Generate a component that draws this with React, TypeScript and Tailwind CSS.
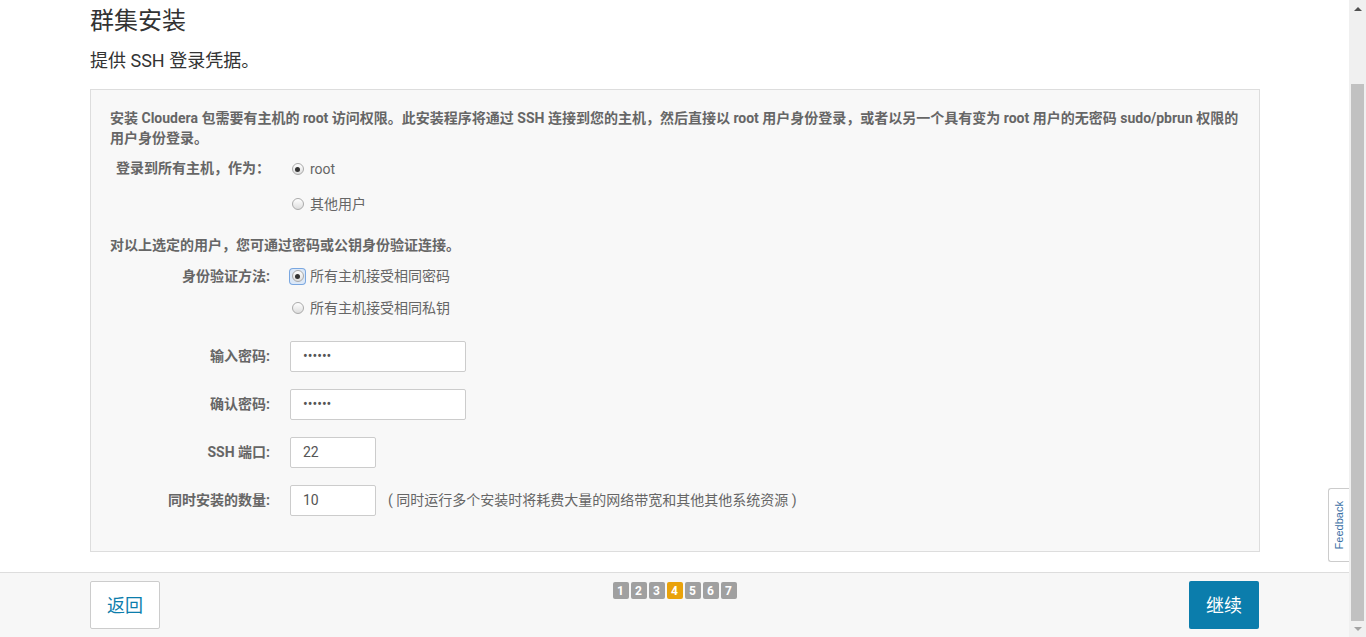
import React from "react";

const font = { fontFamily: '"Roboto", "Noto Sans CJK SC", sans-serif' };

function Radio({ checked, focus }: { checked?: boolean; focus?: boolean }) {
  return (
    <span
      className={
        "inline-flex items-center justify-center w-[15px] h-[15px] " +
        (focus ? "rounded-[3px] ring-1 ring-[#7aa7e0] bg-[#dce8f7]" : "")
      }
    >
      <span className="w-[12px] h-[12px] rounded-full border border-[#aaa] bg-gradient-to-b from-[#fff] to-[#ddd] flex items-center justify-center">
        {checked && <span className="w-[5px] h-[5px] rounded-full bg-[#333]" />}
      </span>
    </span>
  );
}

function RadioRow({ label, checked, focus }: { label: string; checked?: boolean; focus?: boolean }) {
  return (
    <div className="flex items-center gap-[5px] h-[20px] text-[14px] leading-[20px] text-[#666]">
      <Radio checked={checked} focus={focus} />
      <span>{label}</span>
    </div>
  );
}

function Field({ label, value, wide, note }: { label: string; value: string; wide?: boolean; note?: string }) {
  return (
    <div className="flex items-center h-[31px]">
      <div className="w-[180px] pr-[20px] text-right text-[14px] font-bold text-[#666]">{label}</div>
      <div
        className={
          "h-[31px] border border-[#ccc] bg-white rounded-[2px] flex items-center px-[12px] text-[14px] text-[#555] " +
          (wide ? "w-[176px]" : "w-[86px]")
        }
      >
        {value}
      </div>
      {note && <span className="ml-[12px] text-[14px] text-[#666]">{note}</span>}
    </div>
  );
}

const steps = [1, 2, 3, 4, 5, 6, 7];

export default function App() {
  return (
    <div className="w-[1366px] h-[637px] overflow-hidden flex bg-white relative" style={font}>
      <div className="w-[1349px] h-full flex flex-col">
        <div className="flex-1 px-[90px]">
          <h1 className="text-[24px] leading-[28px] text-[#333] mt-[7px]">群集安装</h1>
          <p className="text-[18px] leading-[24px] text-[#333] mt-[14px]">提供 SSH 登录凭据。</p>
          <div className="mt-[16px] w-[1170px] h-[463px] border border-[#ddd] bg-[#f8f8f8] px-[19px] pt-[18px]">
            <p className="text-[14px] leading-[20px] font-bold text-[#666]">
              安装 Cloudera 包需要有主机的 root 访问权限。此安装程序将通过 SSH 连接到您的主机，然后直接以 root 用户身份登录，或者以另一个具有变为 root 用户的无密码 sudo/pbrun 权限的用户身份登录。
            </p>
            <div className="flex mt-[10px]">
              <div className="w-[180px] pl-[6px] text-[14px] leading-[20px] font-bold text-[#666]">登录到所有主机，作为：</div>
              <div className="flex flex-col gap-[15px] pt-[1px]">
                <RadioRow label="root" checked />
                <RadioRow label="其他用户" />
              </div>
            </div>
            <p className="mt-[21px] text-[14px] leading-[20px] font-bold text-[#666]">对以上选定的用户，您可通过密码或公钥身份验证连接。</p>
            <div className="flex mt-[11px]">
              <div className="w-[180px] pr-[20px] text-right text-[14px] leading-[20px] font-bold text-[#666]">身份验证方法:</div>
              <div className="flex flex-col gap-[12px]">
                <RadioRow label="所有主机接受相同密码" checked focus />
                <RadioRow label="所有主机接受相同私钥" />
              </div>
            </div>
            <div className="flex flex-col gap-[17px] mt-[23px]">
              <Field label="输入密码:" value="••••••" wide />
              <Field label="确认密码:" value="••••••" wide />
              <Field label="SSH 端口:" value="22" />
              <Field label="同时安装的数量:" value="10" note="( 同时运行多个安装时将耗费大量的网络带宽和其他其他系统资源 )" />
            </div>
          </div>
        </div>
        <div className="h-[65px] border-t border-[#ddd] bg-[#f7f7f7] flex items-start justify-between px-[90px] pt-[8px]">
          <button className="w-[70px] h-[48px] bg-white border border-[#ccc] rounded-[2px] text-[18px] text-[#0b7dac]">返回</button>
          <div className="flex gap-[2px] mt-[1px]">
            {steps.map((s) => (
              <span
                key={s}
                className={
                  "w-[16px] h-[17px] rounded-[2px] flex items-center justify-center text-[12px] font-bold text-white " +
                  (s === 4 ? "bg-[#e9a20b]" : "bg-[#a0a0a0]")
                }
              >
                {s}
              </span>
            ))}
          </div>
          <button className="w-[70px] h-[48px] bg-[#0b7dac] rounded-[2px] text-[18px] text-white">继续</button>
        </div>
      </div>
      <div className="w-[17px] h-full bg-[#f0f0f0] flex flex-col items-center">
        <div className="h-[17px] flex items-center justify-center">
          <span className="w-0 h-0 border-l-[4px] border-r-[4px] border-b-[4px] border-l-transparent border-r-transparent border-b-[#505050]" />
        </div>
        <div className="mt-[67px] w-[13px] h-[537px] bg-[#c1c1c1]" />
        <div className="flex-1 flex items-center justify-center">
          <span className="w-0 h-0 border-l-[4px] border-r-[4px] border-t-[4px] border-l-transparent border-r-transparent border-t-[#a3a3a3]" />
        </div>
      </div>
      <div className="absolute left-[1328px] top-[488px] w-[21px] h-[74px] bg-white border border-r-0 border-[#ccc] rounded-l-[3px] flex items-center justify-center">
        <span className="-rotate-90 text-[11px] text-[#3a6fa5] whitespace-nowrap" style={{ fontFamily: '"Liberation Sans", sans-serif' }}>
          Feedback
        </span>
      </div>
    </div>
  );
}
